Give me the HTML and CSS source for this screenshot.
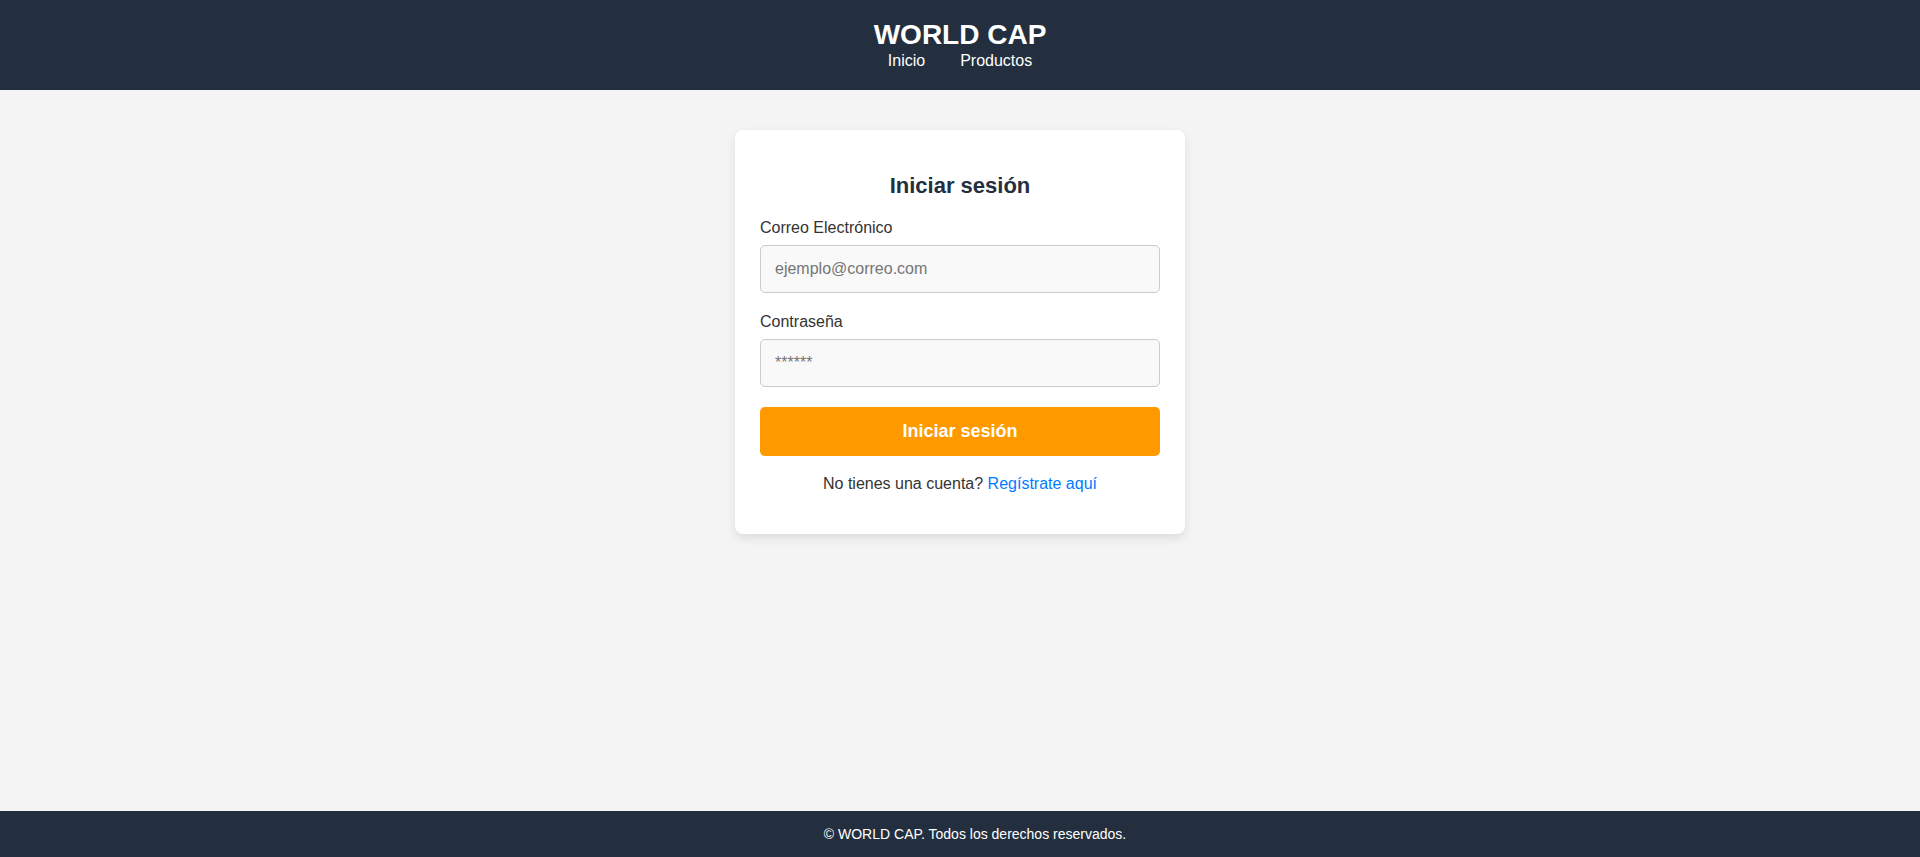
FILE: index.html
```html
<!DOCTYPE html>
<html lang="es">
<head>
<meta charset="utf-8">
<title>WORLD CAP - Iniciar sesión</title>
<link rel="stylesheet" href="styles.css">
</head>
<body>
<header class="site-header">
  <h1 class="brand">WORLD CAP</h1>
  <nav class="nav">
    <a href="#" class="nav-link">Inicio</a>
    <a href="#" class="nav-link">Productos</a>
  </nav>
</header>
<main class="main">
  <section class="card">
    <h2 class="card-title">Iniciar sesión</h2>
    <form class="form">
      <div class="form-group">
        <label class="label" for="email">Correo Electrónico</label>
        <input class="input" type="email" id="email" placeholder="ejemplo@correo.com">
      </div>
      <div class="form-group">
        <label class="label" for="password">Contraseña</label>
        <input class="input" type="password" id="password" placeholder="******">
      </div>
      <button type="submit" class="btn">Iniciar sesión</button>
    </form>
    <p class="register">No tienes una cuenta? <a href="#" class="register-link">Regístrate aquí</a></p>
  </section>
</main>
<footer class="site-footer">
  <p class="footer-text">© WORLD CAP. Todos los derechos reservados.</p>
</footer>
</body>
</html>
```
FILE: styles.css
```css
* { box-sizing: border-box; }
html, body { height: 100%; }
body {
  margin: 0;
  font-family: "Liberation Sans", Arial, sans-serif;
  background: #f4f4f4;
  color: #333;
  display: flex;
  flex-direction: column;
  min-height: 100vh;
  overflow: hidden;
}
.site-header {
  background: #232f3e;
  color: #fff;
  text-align: center;
  padding: 19px 0 21px;
  height: 90px;
}
.brand {
  margin: 0;
  font-size: 28px;
  font-weight: bold;
  line-height: 32px;
}
.nav {
  display: flex;
  justify-content: center;
  gap: 35px;
  font-size: 16px;
  line-height: 19px;
}
.nav-link {
  color: #fff;
  text-decoration: none;
}
.main {
  flex: 1;
  display: flex;
  justify-content: center;
  align-items: flex-start;
  padding-top: 40px;
}
.card {
  width: 450px;
  background: #fff;
  border-radius: 8px;
  padding: 25px;
  box-shadow: 0 4px 10px rgba(0, 0, 0, 0.1);
}
.card-title {
  margin: 18px 0 20px;
  text-align: center;
  font-size: 22px;
  color: #232f3e;
}
.form-group {
  margin-bottom: 20px;
}
.label {
  display: block;
  margin-bottom: 8px;
  font-size: 16px;
  color: #333;
}
.input {
  display: block;
  width: 100%;
  padding: 14px;
  font-family: inherit;
  font-size: 16px;
  background: #f9f9f9;
  border: 1px solid #ccc;
  border-radius: 5px;
  color: #333;
}
.input::placeholder { color: #757575; }
.btn {
  display: block;
  width: 100%;
  padding: 14px;
  font-family: inherit;
  font-size: 18px;
  font-weight: bold;
  line-height: 21px;
  color: #fff;
  background: #ff9900;
  border: none;
  border-radius: 5px;
  cursor: pointer;
}
.register {
  margin: 19px 0 16px;
  text-align: center;
  font-size: 16px;
  color: #333;
}
.register-link {
  color: #007bff;
  text-decoration: none;
}
.site-footer {
  background: #232f3e;
  color: #fff;
  text-align: center;
  padding: 15px 0 15px 30px;
  height: 46px;
}
.footer-text {
  margin: 0;
  font-size: 14px;
  line-height: 16px;
}
```
